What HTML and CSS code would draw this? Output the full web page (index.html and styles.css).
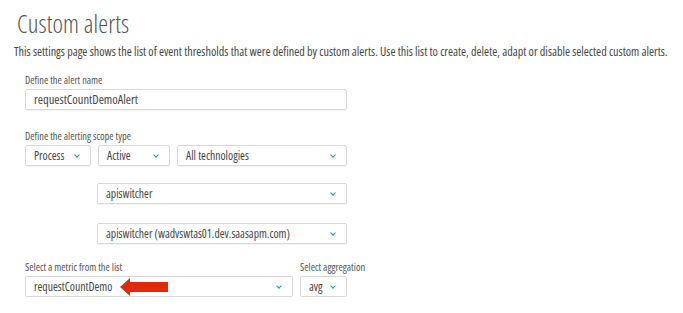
FILE: index.html
```html
<!DOCTYPE html>
<html lang="en">
<head>
  <meta charset="UTF-8">
  <title>Custom alerts</title>
  <link rel="stylesheet" href="styles.css">
</head>
<body>
<div class="page">
  <h1 class="title">Custom alerts</h1>
  <p class="intro">This settings page shows the list of event thresholds that were defined by custom alerts. Use this list to create, delete, adapt or disable selected custom alerts.</p>

  <div class="form">
    <!-- Alert name -->
    <div class="field field-name">
      <label class="label">Define the alert name</label>
      <div class="input w-full">requestCountDemoAlert</div>
    </div>

    <!-- Scope -->
    <div class="field field-scope">
      <label class="label">Define the alerting scope type</label>
      <div class="row">
        <div class="select w-process">Process<span class="chev"></span></div>
        <div class="select w-active">Active<span class="chev"></span></div>
        <div class="select w-tech">All technologies<span class="chev"></span></div>
      </div>
      <div class="sub">
        <div class="select w-sub">apiswitcher<span class="chev"></span></div>
        <div class="select w-sub">apiswitcher (wadvswtas01.dev.saasapm.com)<span class="chev"></span></div>
      </div>
    </div>

    <!-- Metric -->
    <div class="row field-metric">
      <div class="field">
        <label class="label">Select a metric from the list</label>
        <div class="select w-metric">requestCountDemo<span class="chev"></span>
          <svg class="pointer" width="48" height="18" viewBox="0 0 48 18">
            <rect x="9" y="4" width="39" height="10" fill="#df2a0c"/>
            <polygon points="0,9 10,0 10,18" fill="#df2a0c"/>
          </svg>
        </div>
      </div>
      <div class="field">
        <label class="label">Select aggregation</label>
        <div class="select w-agg">avg<span class="chev"></span></div>
      </div>
    </div>
  </div>
</div>
</body>
</html>
```

FILE: styles.css
```css
body {
  margin: 0;
  background: #fff;
  font-family: "Open Sans", "Liberation Sans", sans-serif;
  font-stretch: 75%;
  color: #454646;
}
.page {
  padding: 8px 0 0 14px;
}
.title {
  margin: 0 0 0 3px;
  font-weight: 300;
  font-size: 25px;
  line-height: 30px;
  color: #555;
  letter-spacing: 0.1px;
}
.intro {
  margin: 6px 0 0 0;
  font-size: 12.15px;
  line-height: 16px;
  color: #454646;
  white-space: nowrap;
}
.form {
  padding-left: 11px;
}
.field {
  display: flex;
  flex-direction: column;
}
.field-name {
  margin-top: 13px;
}
.field-scope {
  margin-top: 19px;
}
.field-metric {
  margin-top: 16px;
}
.label {
  font-size: 10.4px;
  line-height: 14px;
  color: #555;
  margin-bottom: 2px;
}
.row {
  display: flex;
  gap: 7px;
}
.sub {
  display: flex;
  flex-direction: column;
  gap: 19px;
  margin: 17px 0 0 72px;
}
.input, .select {
  position: relative;
  box-sizing: border-box;
  height: 21px;
  border: 1px solid #d9d9d9;
  border-radius: 2px;
  box-shadow: 0 1px 1px rgba(0,0,0,0.05);
  padding-left: 8px;
  font-size: 12.5px;
  line-height: 19px;
  color: #454646;
  white-space: nowrap;
}
.select {
  font-size: 11.7px;
}
.chev {
  position: absolute;
  right: 11px;
  top: 7px;
  width: 3px;
  height: 3px;
  border-right: 1.5px solid #00a1b2;
  border-bottom: 1.5px solid #00a1b2;
  transform: rotate(45deg);
}
.w-full { width: 322px; }
.w-process { width: 66px; }
.w-active { width: 72px; }
.w-tech { width: 170px; }
.w-sub { width: 250px; }
.w-metric { width: 268px; }
.w-agg { width: 47px; }
.pointer {
  position: absolute;
  left: 94px;
  top: 1px;
}
```
